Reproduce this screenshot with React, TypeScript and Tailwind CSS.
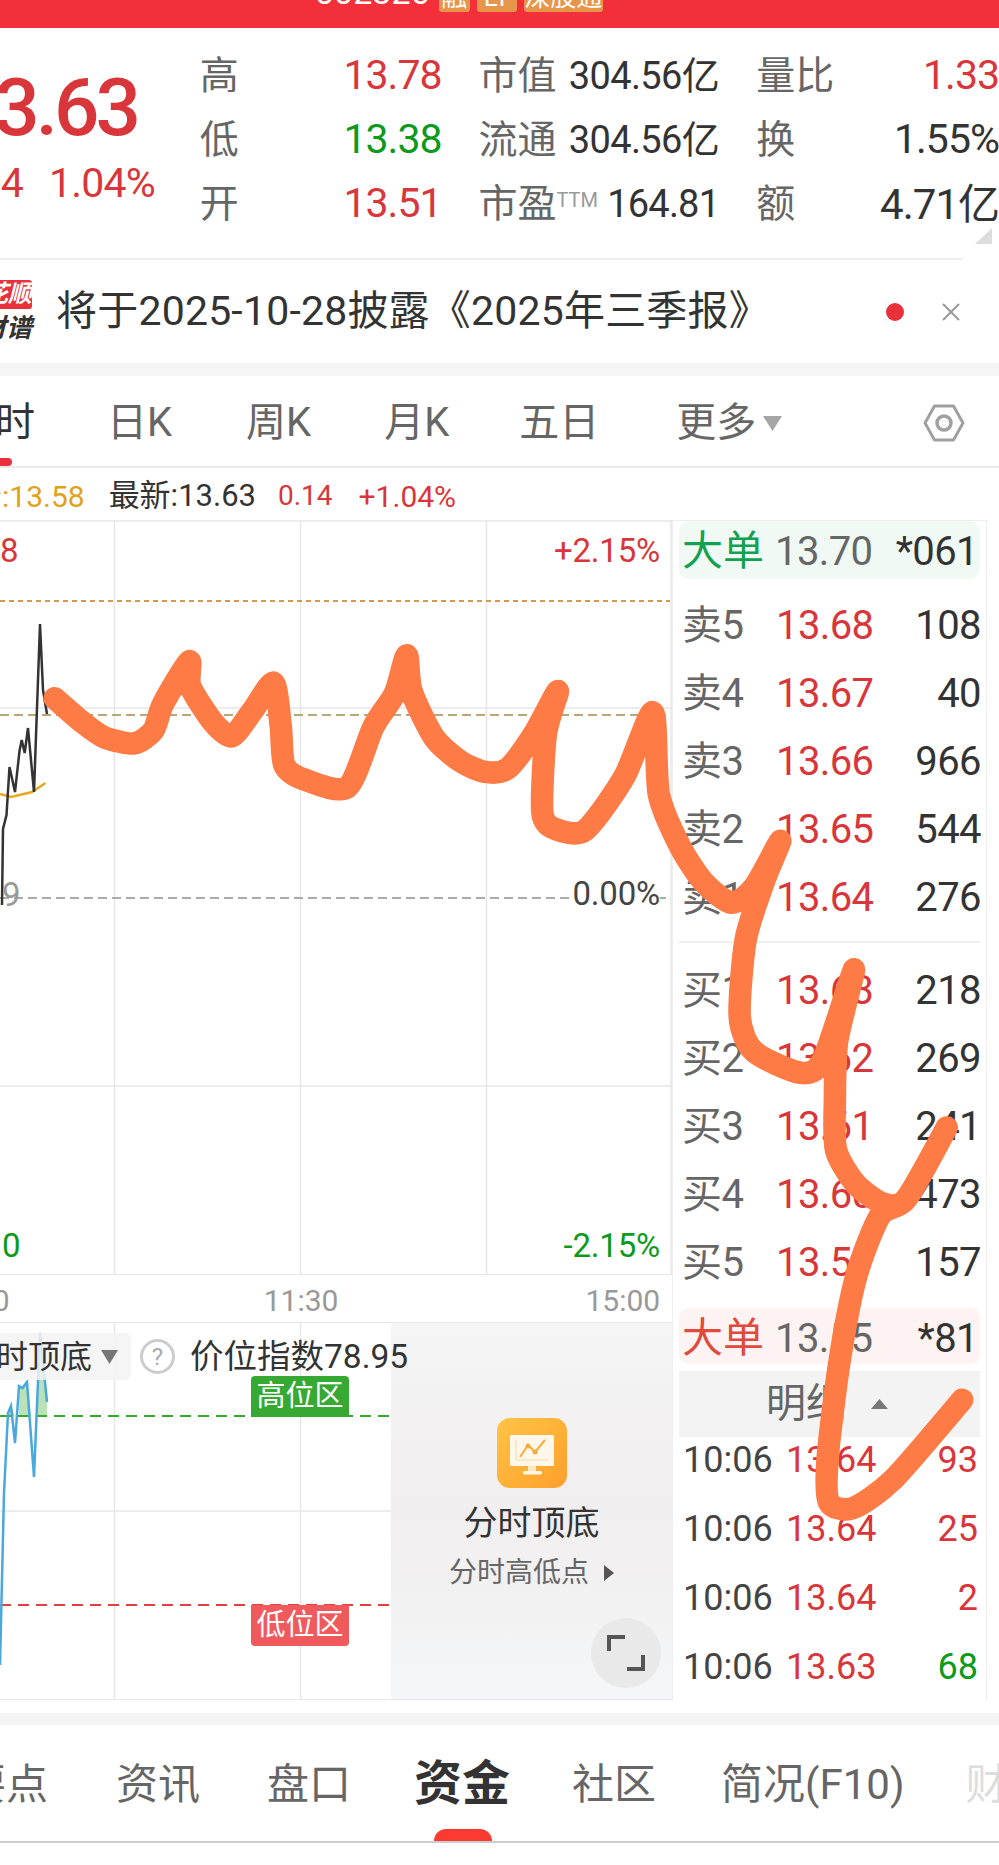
import { X } from "lucide-react";

const RED = "text-[#d8363a]";
const GREEN = "text-[#0b9a1c]";

function smooth(pts: number[][]) {
  let d = `M${pts[0][0]} ${pts[0][1]}`;
  for (let i = 0; i < pts.length - 1; i++) {
    const p0 = pts[i - 1] || pts[i];
    const p1 = pts[i];
    const p2 = pts[i + 1];
    const p3 = pts[i + 2] || p2;
    const c1x = p1[0] + (p2[0] - p0[0]) / 8;
    const c1y = p1[1] + (p2[1] - p0[1]) / 8;
    const c2x = p2[0] - (p3[0] - p1[0]) / 8;
    const c2y = p2[1] - (p3[1] - p1[1]) / 8;
    d += ` C${c1x} ${c1y} ${c2x} ${c2y} ${p2[0]} ${p2[1]}`;
  }
  return d;
}

// hand drawn marker stroke, in the 840 wide coordinates
const scribble = [
  [46, 587], [69, 607], [88, 620], [113, 625], [129, 614], [137, 592], [159, 556], [160, 577], [179, 607], [195, 619],
  [212, 598], [230, 574], [236, 610], [239, 643], [255, 655], [292, 662], [314, 611], [332, 583], [342, 551], [346, 581],
  [365, 620], [387, 640], [408, 649], [427, 646], [449, 617], [469, 581], [459, 617], [456, 683], [467, 697], [492, 698],
  [525, 653], [549, 599], [554, 668], [572, 712], [592, 742], [615, 759], [634, 746], [656, 707], [642, 742], [627, 790],
  [622, 855], [634, 884], [673, 902], [692, 891], [718, 815], [704, 875], [702, 925], [703, 967], [720, 996], [743, 1012],
  [762, 1008], [796, 948], [762, 1008], [740, 1022], [720, 1073], [706, 1144], [696, 1225], [697, 1263], [717, 1268], [751, 1244],
  [809, 1177],
];

const asks = [
  ["卖5", "13.68", "108"],
  ["卖4", "13.67", "40"],
  ["卖3", "13.66", "966"],
  ["卖2", "13.65", "544"],
  ["卖1", "13.64", "276"],
];
const bids = [
  ["买1", "13.63", "218"],
  ["买2", "13.62", "269"],
  ["买3", "13.61", "241"],
  ["买4", "13.60", "473"],
  ["买5", "13.59", "157"],
];
const trades = [
  ["10:06", "13.64", "93", RED],
  ["10:06", "13.64", "25", RED],
  ["10:06", "13.64", "2", RED],
  ["10:06", "13.63", "68", GREEN],
];

function Stat({ label, value, color }: { label: React.ReactNode; value: string; color: string }) {
  return (
    <div className="flex h-[64px] items-center justify-between whitespace-nowrap">
      <span className="text-[39px] text-[#666]">{label}</span>
      <span className={`text-[41px] tracking-[-1px] ${color}`}>{value}</span>
    </div>
  );
}

function Quote({ row }: { row: string[] }) {
  return (
    <div className="grid h-[68px] grid-cols-[94px_1fr_auto] items-center pr-[5px] pl-[9px] text-[40px] tracking-[-0.6px]">
      <span className="text-[#666]">{row[0]}</span>
      <span className={RED}>{row[1]}</span>
      <span className="text-[#333]">{row[2]}</span>
    </div>
  );
}

function BigOrder({ label, price, qty, bg, color }: { label: string; price: string; qty: string; bg: string; color: string }) {
  return (
    <div className={`mx-[6px] grid grid-cols-[93px_1fr_auto] items-center rounded-[10px] pr-[2px] pl-[3px] text-[40px] tracking-[-0.6px] ${bg}`}>
      <span className={`text-[41px] tracking-normal ${color}`}>{label}</span>
      <span className="text-[#666]">{price}</span>
      <span className="text-[#333]">{qty}</span>
    </div>
  );
}

function Chart() {
  return (
    <div className="relative h-[755px] border-b border-[#e8e8e8]">
      <svg className="block" width="672" height="755" viewBox="0 0 672 755">
        <g stroke="#e6e6e6" strokeWidth="1.5" fill="none">
          <path d="M0 1H672M671 0V755M114.5 0V755M300.5 0V755M486.5 0V755M0 188H672M0 566H672" />
        </g>
        <path d="M0 81H670" stroke="#d29a4d" strokeWidth="2" strokeDasharray="5 4" />
        <path d="M0 195H666" stroke="#b9a877" strokeWidth="2" strokeDasharray="9 5" />
        <path d="M0 378H666" stroke="#aaa" strokeWidth="2" strokeDasharray="9 5" />
        <path d="M0 274L11 277L32 272L45.5 263" stroke="#e6a91f" strokeWidth="2.5" fill="none" />
        <path
          d="M2 385L3 309L6.500 295L9.500 247L15 272L19.500 231L21.700 220L24.700 233L28 208L34 272L40 104L43 170L47 194"
          stroke="#333"
          strokeWidth="2.5"
          fill="none"
        />
      </svg>
      <span className={`absolute top-[6px] left-0 text-[33px] ${RED}`}>8</span>
      <span className={`absolute top-[6px] right-[12px] text-[33px] tracking-[-0.2px] ${RED}`}>+2.15%</span>
      <span className="absolute top-[350px] left-[2px] text-[33px] text-[#999]">9</span>
      <span className="absolute top-[350px] right-[12px] bg-white text-[33px] leading-[48px] tracking-[-0.2px] text-[#444]">0.00%</span>
      <span className={`absolute top-[701px] left-[2px] text-[33px] ${GREEN}`}>0</span>
      <span className={`absolute top-[701px] right-[12px] text-[33px] tracking-[-0.2px] ${GREEN}`}>-2.15%</span>
    </div>
  );
}

function Indicator() {
  return (
    <div className="flex h-[377px] border-b border-[#e8e8e8]">
      <div className="relative w-[391px] overflow-hidden">
        <svg className="block" width="391" height="376" viewBox="0 0 391 376">
          <path d="M114.500 0V376M300.500 0V376M0 188H391" stroke="#e6e6e6" strokeWidth="1.5" fill="none" />
          <path d="M8 93L11 83L15 93H19L19 63L22.500 65L27 59L31 93H37L40 10L47 79V93Z" fill="#b9e2b6" />
          <path d="M0 93H391" stroke="#35a932" strokeWidth="2" strokeDasharray="11 7" />
          <path d="M0 282H391" stroke="#e2403f" strokeWidth="2" strokeDasharray="11 7" />
          <path
            d="M0 342L4 170L8 90L11 83L15 120L19 63L22.500 65L27 59L34 154L40 10L47 79"
            stroke="#4aa8dc"
            strokeWidth="2.5"
            fill="none"
          />
        </svg>
        <div className="absolute top-[10px] left-0 flex h-[47px] w-[131px] items-center justify-end rounded-r-[6px] bg-[#f3f3f3]/85 pr-[13px]">
          <span className="whitespace-nowrap text-[32px] text-[#333]">分时顶底</span>
          <svg className="ml-[9px] shrink-0" width="17" height="14" viewBox="0 0 17 14">
            <path d="M0 0H17L8.500 14Z" fill="#777" />
          </svg>
        </div>
        <span className="absolute top-[16px] left-[140px] flex h-[35px] w-[35px] items-center justify-center rounded-full border-[3px] border-[#ccc] text-[24px] text-[#aaa]">
          ?
        </span>
        <div className="absolute top-[53px] left-[251px] flex h-[41px] w-[98px] items-center justify-center rounded-t-[4px] bg-[#35a932] text-[29px] text-white">
          高位区
        </div>
        <div className="absolute top-[282px] left-[251px] flex h-[41px] w-[98px] items-center justify-center rounded-b-[4px] bg-[#ef5a5c] text-[29px] text-white">
          低位区
        </div>
      </div>
      <div className="relative flex w-[281px] flex-col items-center bg-linear-to-b from-[#f5f5f5] via-[#f1eeef] to-[#f4f6f7] pt-[95px]">
        <svg width="70" height="70" viewBox="0 0 70 70">
          <defs>
            <linearGradient id="appIcon" x1="0" y1="0" x2="1" y2="1">
              <stop offset="0" stopColor="#ffc445" />
              <stop offset="1" stopColor="#ff9f2b" />
            </linearGradient>
          </defs>
          <rect width="70" height="70" rx="13" fill="url(#appIcon)" />
          <rect x="13" y="17" width="44" height="31" rx="1.500" fill="#fff8ea" />
          <rect x="26" y="53" width="19" height="3.500" rx="1.500" fill="#fff8ea" />
          <path d="M31 48H39V53H31Z" fill="#ffe9c0" />
          <path d="M19 22V42H51" stroke="#f3d9a8" strokeWidth="1" fill="none" />
          <path d="M23 39L31 27L38 34L48 22" stroke="#f6ab3d" strokeWidth="2" fill="none" />
          <circle cx="31" cy="28" r="2.500" fill="#f6ab3d" />
          <circle cx="38" cy="34" r="2.500" fill="#f6ab3d" />
        </svg>
        <span className="mt-[15px] text-[34px] leading-[40px] text-[#333]">分时顶底</span>
        <div className="mt-[12px] flex items-center">
          <span className="text-[28px] leading-[36px] text-[#666]">分时高低点</span>
          <svg className="ml-[15px]" width="10" height="16" viewBox="0 0 10 16">
            <path d="M0 0L10 8L0 16Z" fill="#555" />
          </svg>
        </div>
        <div className="absolute top-[295px] left-[200px] flex h-[70px] w-[70px] items-center justify-center rounded-full bg-[#e9e9e9]">
          <svg width="38" height="36" viewBox="0 0 38 36">
            <path d="M2 16V2H18M36 20V34H20" stroke="#555" strokeWidth="4" fill="none" />
          </svg>
        </div>
      </div>
    </div>
  );
}

function OrderBook() {
  return (
    <div className="h-[1180px] w-[315px] border-x border-t border-[#eee]">
      <div className="flex h-[58px]">
        <BigOrder label="大单" price="13.70" qty="*061" bg="w-[303px] bg-[#f1f9f5]" color="text-[#12a150]" />
      </div>
      <div className="mt-[13px]">
        {asks.map((r) => (
          <Quote key={r[0]} row={r} />
        ))}
      </div>
      <div className="mx-[6px] mt-[9px] mb-[14px] h-[2px] bg-[#eee]" />
      <div>
        {bids.map((r) => (
          <Quote key={r[0]} row={r} />
        ))}
      </div>
      <div className="mt-[11px] flex h-[56px]">
        <BigOrder label="大单" price="13.55" qty="*81" bg="w-[303px] bg-[#fdf3f2]" color="text-[#e04a3c]" />
      </div>
      <div className="mx-[6px] mt-[7px] flex h-[66px] items-center bg-[#f3f3f3] pl-[87px]">
        <span className="text-[40px] text-[#666]">明细</span>
        <svg className="ml-[25px]" width="17" height="10" viewBox="0 0 17 10">
          <path d="M8.500 0L17 10H0Z" fill="#777" />
        </svg>
      </div>
      <div className="-mt-[12px]">
        {trades.map((t, i) => (
          <div key={i} className="relative flex h-[69px] items-center pr-[8px] pl-[10px] text-[36px]">
            <span className="w-[103px] text-[#444]">{t[0]}</span>
            <span className={RED}>{t[1]}</span>
            <span className={`ml-auto ${t[3]}`}>{t[2]}</span>
          </div>
        ))}
      </div>
    </div>
  );
}

export default function App() {
  return (
    <div className="relative h-[1865px] w-[999px] overflow-hidden bg-white font-[Roboto,'Noto_Sans_CJK_SC',sans-serif]">
      {/* Red title bar, cut by the top of the picture */}
      <div className="flex h-[28px] items-end overflow-hidden bg-[#f33039] pb-[16px] pl-[315px]">
        <span className="text-[34px] leading-[40px] text-white">002326</span>
        <div className="mb-0 ml-[9px] flex gap-[7px] text-[26px] leading-[30px] text-white">
          <span className="w-[31px] rounded-b-[3px] bg-[#e6954a] text-center">融</span>
          <span className="w-[40px] rounded-b-[3px] bg-[#e6954a] text-center">LT</span>
          <span className="w-[79px] rounded-b-[3px] bg-[#e6954a] text-center whitespace-nowrap">深股通</span>
        </div>
      </div>

      {/* Quote summary */}
      <div className="relative flex h-[230px] pt-[16px]">
        <div className="w-[200px]">
          <div className="flex h-[128px] w-[137px] items-center justify-end">
            <span className={`text-[80px] font-medium tracking-[-4px] ${RED}`}>13.63</span>
          </div>
          <div className={`-mt-[19px] flex w-[155px] justify-end gap-[26px] text-[41px] tracking-[-0.8px] whitespace-nowrap ${RED}`}>
            <span>0.14</span>
            <span>1.04%</span>
          </div>
        </div>
        <div className="w-[242px]">
          <Stat label="高" value="13.78" color={RED} />
          <Stat label="低" value="13.38" color={GREEN} />
          <Stat label="开" value="13.51" color={RED} />
        </div>
        <div className="ml-[37px] w-[241px]">
          <Stat label="市值" value="304.56亿" color="text-[#333] !text-[38px] !tracking-[-0.6px]" />
          <Stat label="流通" value="304.56亿" color="text-[#333] !text-[38px] !tracking-[-0.6px]" />
          <Stat
            label={
              <>
                市盈<sup className="text-[20px] text-[#999]">TTM</sup>
              </>
            }
            value="164.81"
            color="text-[#333] !text-[38px] !tracking-[-0.8px]"
          />
        </div>
        <div className="ml-[37px] w-[243px]">
          <Stat label="量比" value="1.33" color={RED} />
          <Stat label="换" value="1.55%" color="text-[#333]" />
          <Stat label="额" value="4.71亿" color="text-[#333] !text-[42px]" />
        </div>
        <svg className="absolute right-[7px] bottom-[14px]" width="17" height="16" viewBox="0 0 17 16">
          <path d="M17 0V16H0Z" fill="#ddd" />
        </svg>
      </div>

      {/* Notice */}
      <div className="flex h-[105px] w-[963px] items-center border-t-2 border-[#eee]">
        <div className="-mt-[2px] flex w-[32px] flex-col items-end">
          <span className="flex h-[29px] w-[32px] items-center justify-end overflow-hidden rounded-r-[3px] bg-[#e8313a] text-[24px] font-bold whitespace-nowrap text-white italic">
            花顺
          </span>
          <span className="mt-[5px] text-[26px] leading-[28px] font-bold whitespace-nowrap text-[#333] italic">财谱</span>
        </div>
        <span className="ml-[24px] text-[41px] tracking-[0.2px] whitespace-nowrap text-[#333]">将于2025-10-28披露《2025年三季报》</span>
        <span className="ml-auto h-[18px] w-[18px] shrink-0 rounded-full bg-[#e8313a]" />
        <X className="mr-[-3px] ml-[32px] shrink-0" size={30} strokeWidth={1.500} color="#999" />
      </div>
      <div className="h-[13px] bg-[#f5f5f5]" />

      {/* Period tabs */}
      <div className="relative flex h-[92px] items-center border-b-2 border-[#eaeaea] pt-[4px] text-[40px] whitespace-nowrap text-[#666]">
        <span className="-ml-[45px] text-[#333]">分时</span>
        <span className="ml-[72px]">日K</span>
        <span className="ml-[74px]">周K</span>
        <span className="ml-[73px]">月K</span>
        <span className="ml-[70px]">五日</span>
        <span className="ml-[77px]">更多</span>
        <svg className="ml-[7px]" width="19" height="15" viewBox="0 0 19 15">
          <path d="M0 0H19L9.500 15Z" fill="#a5a5a5" />
        </svg>
        <svg className="ml-[141px]" width="42" height="38" viewBox="0 0 42 38">
          <path d="M11.500 2H30.500L40 19L30.500 36H11.500L2 19Z" stroke="#a0a0a0" strokeWidth="3" strokeLinejoin="round" fill="none" />
          <circle cx="21" cy="19" r="7" stroke="#a0a0a0" strokeWidth="3.500" fill="none" />
        </svg>
        <span className="absolute bottom-0 left-0 h-[8px] w-[12px] rounded-r-full bg-[#e8313a]" />
      </div>

      {/* Price line */}
      <div className="flex h-[52px] items-center pt-[4px] text-[30px] whitespace-nowrap">
        <span className="-ml-[58px] text-[#e0a21a]">均价:13.58</span>
        <span className="ml-[24px] text-[31px] text-[#333]">最新:13.63</span>
        <span className={`ml-[22px] text-[28px] ${RED}`}>0.14</span>
        <span className={`ml-[26px] ${RED}`}>+1.04%</span>
      </div>

      {/* Charts and order book */}
      <div className="flex">
        <div className="w-[672px]">
          <Chart />
          <div className="relative flex h-[48px] items-center border-b border-[#e8e8e8] pt-[4px] text-[30px] text-[#999]">
            <span className="-ml-[65px]">09:30</span>
            <span className="ml-[254px]">11:30</span>
            <span className="ml-[247px]">15:00</span>
          </div>
          <Indicator />
        </div>
        <OrderBook />
      </div>

      {/* This sits over the indicator and its panel */}
      <span className="absolute top-[1332px] left-[190px] text-[33.500px] whitespace-nowrap text-[#333]">价位指数78.95</span>

      {/* Section tabs */}
      <div className="mt-[13px] h-[12px] bg-[#f5f5f5]" />
      <div className="relative flex h-[118px] items-center border-b-2 border-[#ccc] pt-[2px] text-[42px] whitespace-nowrap text-[#666]">
        <span className="-ml-[36px]">要点</span>
        <span className="ml-[68px]">资讯</span>
        <span className="ml-[67px]">盘口</span>
        <span className="ml-[63px] text-[48px] font-bold text-[#333]">资金</span>
        <span className="ml-[62px]">社区</span>
        <span className="ml-[65px]">简况(F10)</span>
        <span className="ml-[61px] text-[#ddd]">财务</span>
        <span className="absolute bottom-0 left-[434px] h-[12px] w-[58px] rounded-t-full bg-[#fb3a32]" />
      </div>

      {/* Marker drawn on the screenshot */}
      <svg className="pointer-events-none absolute inset-0" width="999" height="1865" viewBox="0 0 840 1568">
        <path d={smooth(scribble)} stroke="#ff7b46" strokeWidth="19" strokeLinecap="round" strokeLinejoin="round" fill="none" />
      </svg>
    </div>
  );
}
